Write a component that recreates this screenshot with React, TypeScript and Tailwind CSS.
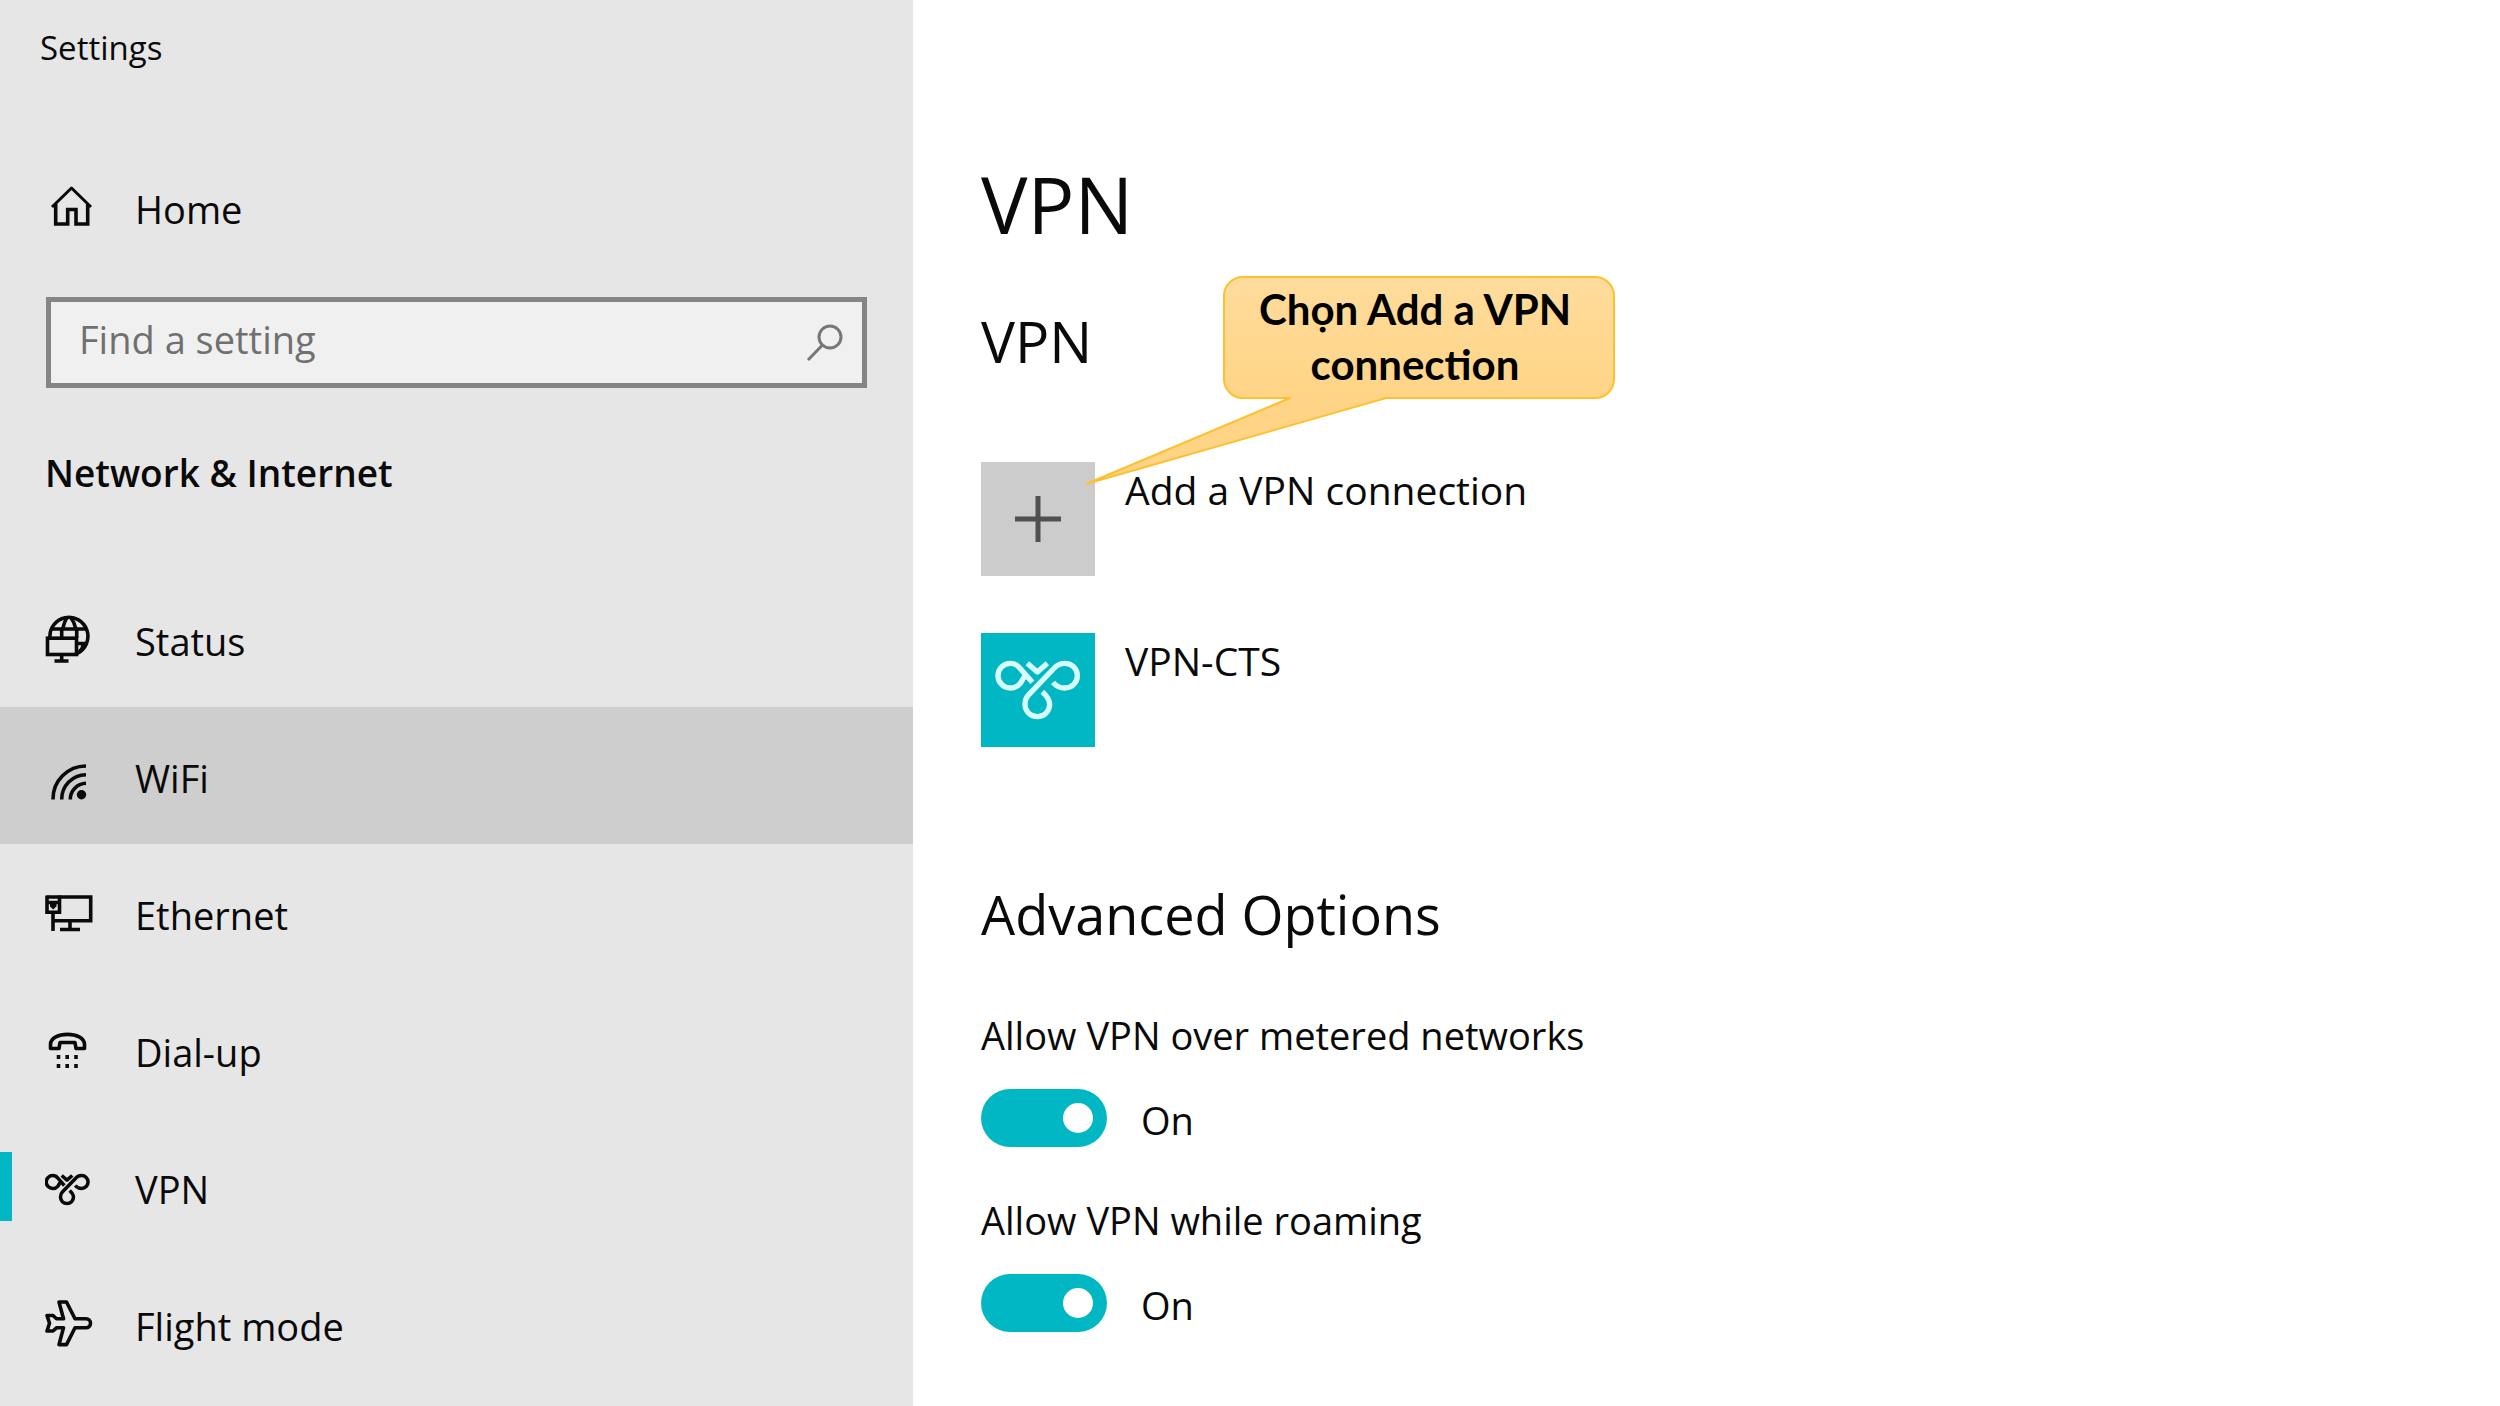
import type { ReactNode } from "react";

const strokeProps = {
  fill: "none",
  stroke: "currentColor",
  strokeWidth: 3,
  strokeLinejoin: "round" as const,
};

function Icon({ children }: { children: ReactNode }) {
  return (
    <svg
      viewBox="0 0 48 48"
      className="size-12 shrink-0"
      aria-hidden="true"
      {...strokeProps}
      strokeWidth={3.6}
    >
      {children}
    </svg>
  );
}

function HomeIcon() {
  return (
    <Icon>
      <path d="M7 24 26.5 5 46 24" strokeWidth="3" />
      <path d="M10.7 21v20h12V26.5H31V41h11.7V21" strokeLinejoin="miter" />
    </Icon>
  );
}

function StatusIcon() {
  return (
    <Icon>
      <path d="M5 23a19 19 0 1 1 27 15.500" />
      <path d="M6 14H42M16.700 23v-9M18 13c1-4.500 2-7.500 4-10M26 3c2 2.500 3.600 6 4.600 10M31.700 14v9M32 28.500h10.500M34 37c2.500-2 4-5 4.500-8" />
      <rect x="2.500" y="23.200" width="29" height="16.300" strokeLinejoin="miter" />
      <path d="M16.700 39.500V46M9.500 46h14" />
    </Icon>
  );
}

function WifiIcon() {
  return (
    <Icon>
      <path d="M8 47.500A33 33 0 0 1 41 14M16.700 47.500A24.500 24.500 0 0 1 41 22.700M25.300 47.500A16 16 0 0 1 41 31.300" />
      <circle cx="36.500" cy="42.800" r="4.700" fill="currentColor" stroke="none" />
    </Icon>
  );
}

function EthernetIcon() {
  return (
    <Icon>
      <path d="M2 8h43.700v23.700H8M25 32v8M15 40.500h20M8 23.500V42" strokeLinejoin="miter" />
      <path d="M2 6.500v16.700h12.500V6.500M2 13.500h12.500" strokeLinejoin="miter" />
      <path d="M5 15h6.500v2.500L8.300 20.500 5 17.500z" fill="currentColor" stroke="none" />
    </Icon>
  );
}

function DialUpIcon() {
  return (
    <Icon>
      <path d="M5.500 22.500V18.500C5.500 5 39.500 5 39.500 18.500v4h-8.500L30 16.500H15l-1 6z" />
      <path d="M13.500 29v4M22.200 29v4M31 29v4M13.500 38v4M22.200 38v4M31 38v4" />
    </Icon>
  );
}

function FlightIcon() {
  return (
    <Icon>
      <path d="M41 18.800H30L21.500 2H14l4.500 16.800h-7L8 15.500H2l2.500 7.800L2 31h6l3.500-3.200h7L14 44.600h7.500L30 27.800h11a4.500 4.500 0 0 0 0-9z" />
    </Icon>
  );
}

function VpnPaths() {
  return (
    <>
      <path d="M190 188 152 145Q142 131 124 131a37 37 0 0 0 0 74Q142 205 154 191L168 168" />
      <path d="M175 131 205 157 235 131" />
      <path d="M252 188Q266 205 288 205a37 37 0 0 0 0-74Q268 131 256 145L180 224Q168 236 168 254a37 37 0 0 0 74 0Q242 236 220 216" />
    </>
  );
}

function VpnIcon() {
  return (
    <svg
      viewBox="80 60 273 273"
      className="size-12 shrink-0"
      aria-hidden="true"
      {...strokeProps}
      strokeWidth={20}
    >
      <VpnPaths />
    </svg>
  );
}

const navItems = [
  { label: "Status", icon: <StatusIcon />, row: "" },
  { label: "WiFi", icon: <WifiIcon />, row: "bg-[#cecece]" },
  { label: "Ethernet", icon: <EthernetIcon />, row: "" },
  { label: "Dial-up", icon: <DialUpIcon />, row: "" },
  { label: "VPN", icon: <VpnIcon />, row: "", current: true },
  { label: "Flight mode", icon: <FlightIcon />, row: "" },
];

function Sidebar() {
  return (
    <aside className="bg-[#e6e6e6] pt-7">
      <p className="px-10 text-[33px] leading-10">Settings</p>

      <a href="#home" className="mt-[115px] flex items-center gap-[42px] px-[45px]">
        <HomeIcon />
        <span className="pt-1 leading-11">Home</span>
      </a>

      <form
        className="mx-[46px] mt-[66px] flex h-[91px] items-center border-[5px] border-[#858585] bg-[#f0f0f0] pr-[17px]"
        onSubmit={(e) => e.preventDefault()}
      >
        <input
          type="search"
          aria-label="Find a setting"
          placeholder="Find a setting"
          className="h-full min-w-0 flex-1 bg-transparent pb-2 pl-7 outline-none placeholder:text-[#707070]"
        />
        <button type="submit" aria-label="Search" className="text-[#777777]">
          <svg viewBox="0 0 40 40" className="size-10" aria-hidden="true" {...strokeProps}>
            <circle cx="25" cy="14" r="11" />
            <path d="M17.500 22 3 37" />
          </svg>
        </button>
      </form>

      <h2 className="mt-[61px] px-[45px] text-[37px] leading-12 font-semibold">
        Network &amp; Internet
      </h2>

      <nav className="mt-[73px]" aria-label="Network &amp; Internet">
        {navItems.map((item) => (
          <a
            key={item.label}
            href={`#${item.label}`}
            aria-current={item.current ? "page" : undefined}
            className={`relative flex h-[137px] items-center gap-[42px] px-[45px] ${item.row}`}
          >
            {item.current && (
              <span className="absolute inset-y-[34px] left-0 w-3 bg-[#00b7c3]" />
            )}
            {item.icon}
            <span className="pt-1 leading-12">{item.label}</span>
          </a>
        ))}
      </nav>
    </aside>
  );
}

function Callout() {
  return (
    <div
      role="note"
      className="absolute -top-[186px] left-[242px] w-[392px] rounded-[20px] border-2 border-[#fdc02f] bg-linear-to-b from-[#ffdc9c] to-[#ffd486] pt-1 pr-6 pb-[5px] pl-4 text-center font-['Lato','Liberation_Sans',sans-serif] text-[42px] leading-[55px] font-bold text-black"
    >
      Chọn Add a VPN connection
      <svg
        viewBox="0 0 304 92"
        className="absolute top-[118px] -left-[142px] h-[92px] w-[304px]"
        aria-hidden="true"
      >
        <path d="M210 0H300V2L3 88 207 2z" fill="#ffd486" />
        <path d="M205 2H207L3 88 303 2" fill="none" stroke="#fdc02f" strokeWidth="2" />
      </svg>
    </div>
  );
}

function Toggle({ id, label }: { id: string; label: string }) {
  return (
    <div>
      <label htmlFor={id} className="block leading-12">
        {label}
      </label>
      <div className="mt-[30px] flex items-center gap-[34px]">
        <input
          id={id}
          type="checkbox"
          role="switch"
          defaultChecked
          className="flex h-[58px] w-[126px] shrink-0 appearance-none items-center rounded-full bg-[#8a8a8a] px-[14px] before:size-[30px] before:rounded-full before:bg-white checked:justify-end checked:bg-[#00b7c3]"
        />
        <span className="pt-1 leading-12">On</span>
      </div>
    </div>
  );
}

function Connections() {
  return (
    <div className="relative mt-[85px] flex flex-col items-start gap-[57px] text-[39px]">
      <button type="button" className="flex items-start gap-[30px] text-left">
        <span className="flex size-[114px] items-center justify-center bg-[#cccccc] text-[#505050]">
          <svg viewBox="0 0 48 48" className="size-12" aria-hidden="true" {...strokeProps} strokeWidth={5}>
            <path d="M1 24h46M24 1v46" />
          </svg>
        </span>
        <span className="pt-1 leading-12">Add a VPN connection</span>
      </button>
      <button type="button" className="flex items-start gap-[30px] text-left">
        <span className="size-[114px] bg-[#00b7c3] text-[#d8ffff]">
          <svg
            viewBox="36 40 342 342"
            className="size-full"
            aria-hidden="true"
            {...strokeProps}
            strokeWidth={16}
          >
            <VpnPaths />
          </svg>
        </span>
        <span className="pt-1 leading-12">VPN-CTS</span>
      </button>
      <Callout />
    </div>
  );
}

export default function App() {
  return (
    <div className="grid min-h-screen grid-cols-[913fr_1587fr] bg-white font-['Open_Sans','Noto_Sans',sans-serif] text-[38px] text-[#0a0a0a]">
      <Sidebar />
      <main className="px-[68px] pt-[156px]">
        <h1 className="text-[78px] leading-24">VPN</h1>
        <h2 className="mt-[53px] text-[57px] leading-18">VPN</h2>
        <Connections />
        <h2 className="mt-[131px] text-[54px] leading-18">Advanced Options</h2>
        <div className="mt-[61px] flex flex-col gap-[49px]">
          <Toggle id="metered" label="Allow VPN over metered networks" />
          <Toggle id="roaming" label="Allow VPN while roaming" />
        </div>
      </main>
    </div>
  );
}
